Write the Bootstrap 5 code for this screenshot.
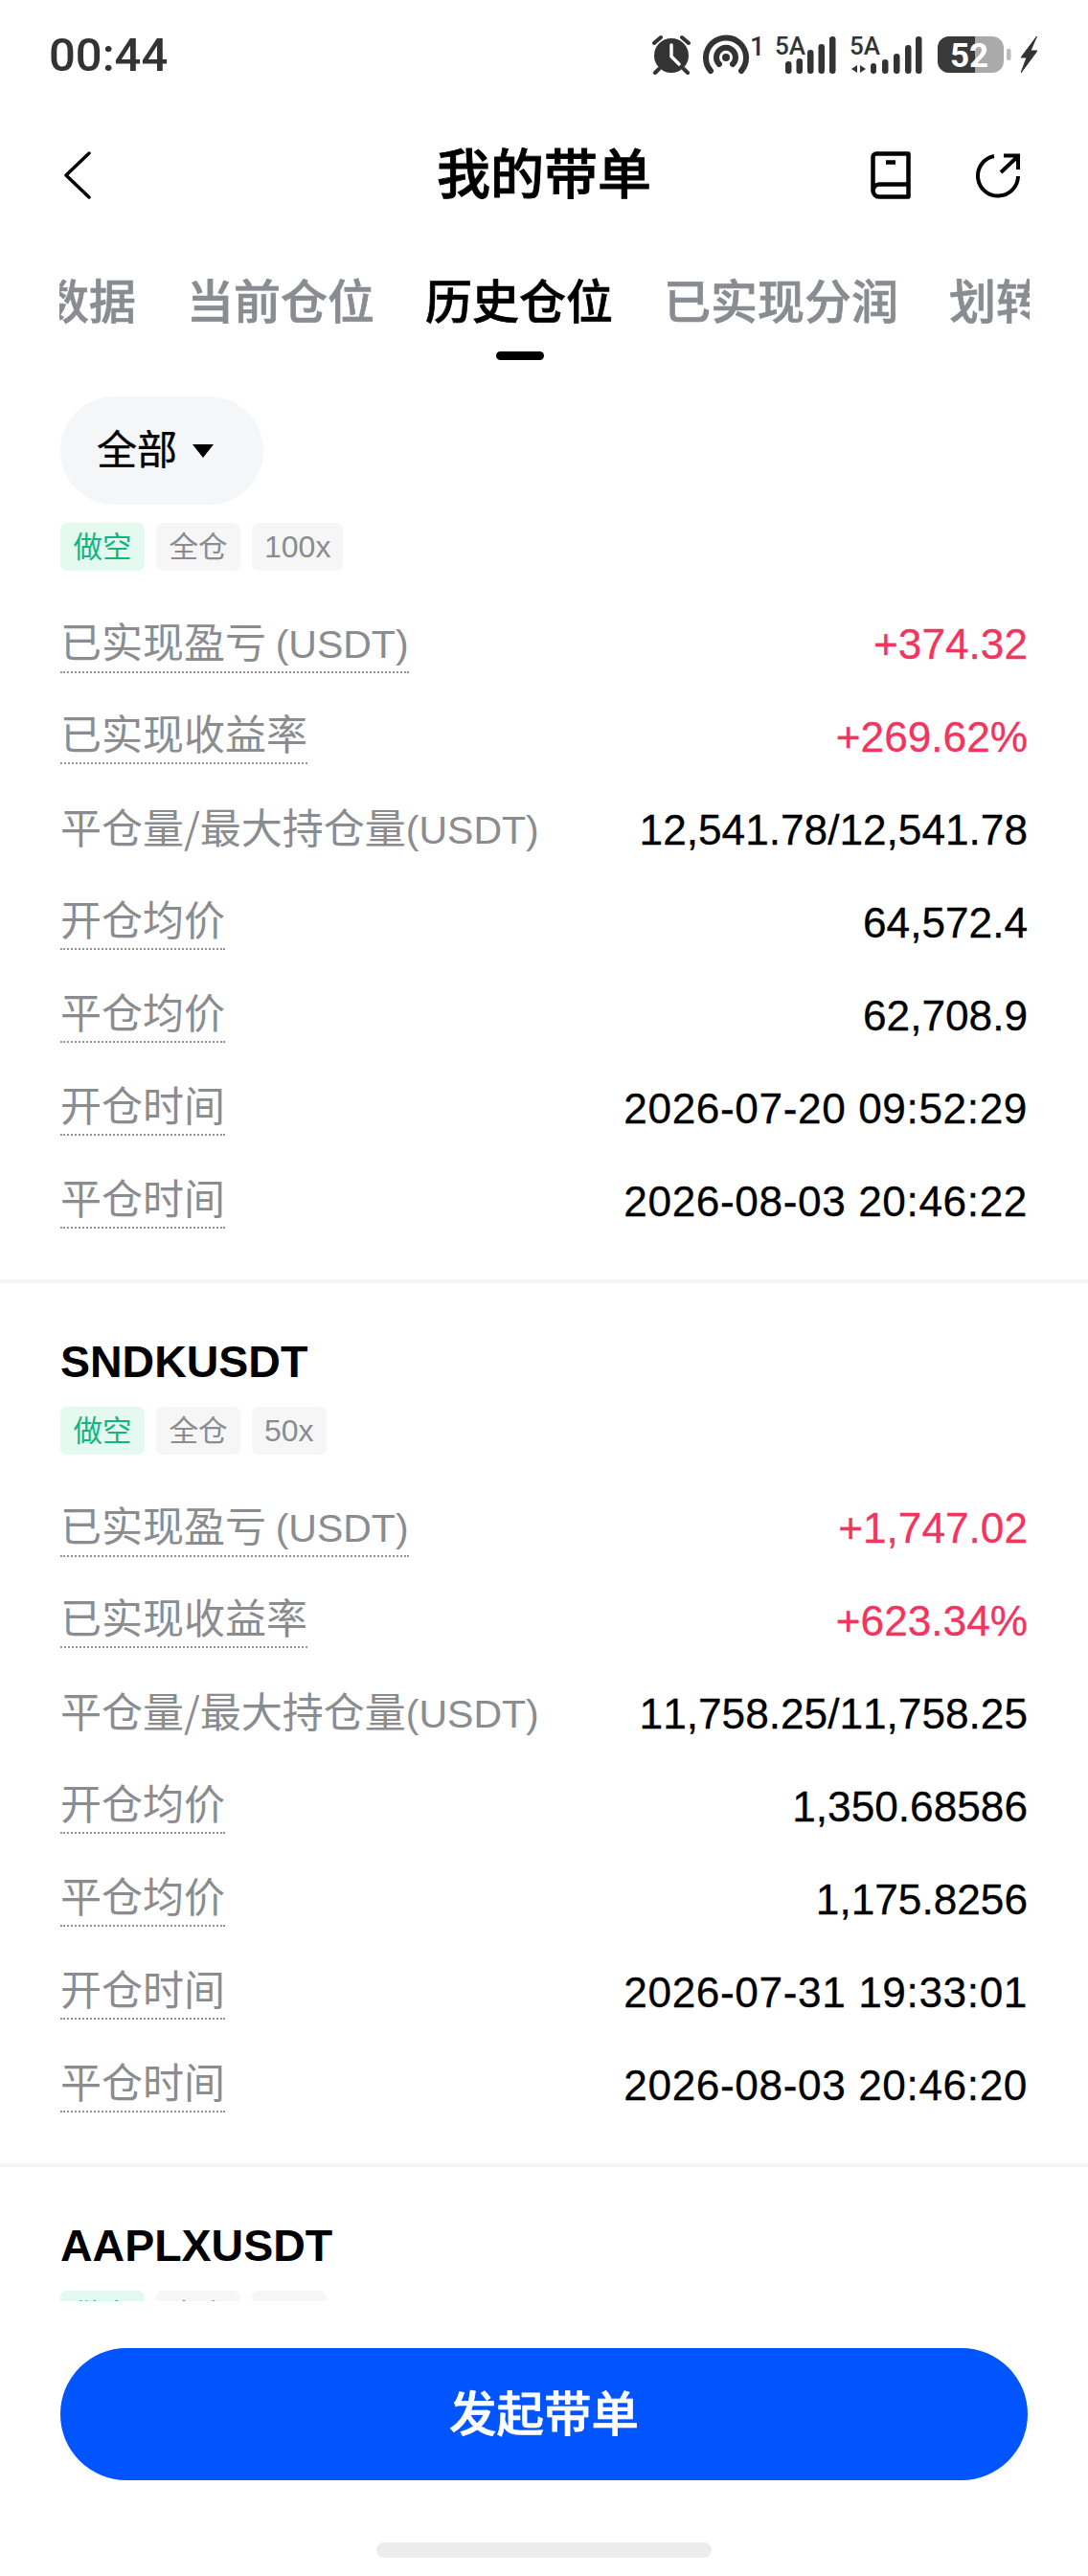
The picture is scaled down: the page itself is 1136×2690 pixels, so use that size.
<!DOCTYPE html>
<html lang="zh-CN">
<head>
<meta charset="utf-8">
<title>我的带单</title>
<link rel="stylesheet" href="https://cdn.jsdelivr.net/npm/bootstrap@5.3.0/dist/css/bootstrap.min.css">
<style>
html,body{margin:0;background:#fff}
body{font-family:"Liberation Sans","Noto Sans CJK SC",sans-serif;color:#000}
.phone{width:1136px;height:2690px;overflow:hidden;background:#fff}
.status-strip{height:114px;padding:0 53px 0 51px;color:#333}
.clock{font:500 49px/1 Roboto,sans-serif;color:#333}
.sicons svg{display:block;flex:none}
.sicons text{font-family:Roboto,sans-serif;font-weight:500;fill:#333}
.top-nav{height:138px}
.page-title{font:500 56px/1 "Noto Sans CJK SC",sans-serif;color:#000;padding-bottom:10px;-webkit-text-stroke:.9px #000}
.tab-strip{height:126px;margin:0 61px 0 62px;overflow:hidden;gap:53px;white-space:nowrap;position:relative}
.tab-item{font:500 49px/60px "Noto Sans CJK SC",sans-serif;color:#898c90;position:relative;height:126px;padding-top:30px;flex:none;-webkit-text-stroke:.7px}
.tab-item.first{margin-left:-18px}
.tab-item.on{color:#000}
.tab-item.on::after{content:"";position:absolute;left:74px;bottom:2px;width:50px;height:9px;border-radius:5px;background:#000}
.list-view{height:2025px;overflow:hidden;flex:none}
.sheet{padding:0 63px}
.filter-pill{height:113px;width:212px;border-radius:57px;background:#f5f6f7;border:0;color:#000;font:400 42px/1 "Noto Sans CJK SC",sans-serif;padding:0 0 0 38px}
.filter-text{padding-bottom:8px;-webkit-text-stroke:.4px #000}
.caret-mark{width:0;height:0;border-left:11px solid transparent;border-right:11px solid transparent;border-top:14px solid #000;margin-left:16px;margin-top:0}
.tag-row{gap:12px;margin-top:19px;height:50px}
.tag-chip{height:50px;border-radius:7px;background:#f6f6f7;color:#8a8c8f;font:400 30.500px/46px "Noto Sans CJK SC",sans-serif;padding:0 13.500px}
.tag-chip.short{background:#e4f9f0;color:#12b581}
.tag-chip.lev{font:400 32px/50px "Liberation Sans",sans-serif;padding:0 13px}
.stat-list{margin-top:28px}
.stat-row{height:97px}
.stat-label{font:400 43px/44px "Noto Sans CJK SC","Liberation Sans",sans-serif;color:#8a8c8f;padding-bottom:10px;border-bottom:2px dotted #919396;white-space:nowrap}
.stat-label.mixed{line-height:52px;padding-bottom:2px}
.stat-label.plain{border-bottom-color:transparent}
.stat-label .latin{font-family:"Liberation Sans",sans-serif;font-size:41px;font-kerning:none}
.stat-value{font:400 44.200px/52px "Liberation Sans",sans-serif;color:#000;white-space:nowrap;font-kerning:none;-webkit-text-stroke:.3px}
.stat-value.up{color:#f0355f}
.stat-value.stamp{letter-spacing:.6px}
.rule{height:4px;background:#f5f5f6;margin:33px -63px 0}
.symbol{font:700 46.500px/56px "Liberation Sans",sans-serif;margin-top:54px;color:#000}
.foot-area{padding:49px 63px 0}
.go-btn{height:138px;border-radius:69px;background:#0055ff;border:0;color:#fff;font:500 49.500px/1 "Noto Sans CJK SC",sans-serif;padding-bottom:8px;-webkit-text-stroke:.7px #fff}
.home-bar{width:350px;height:16px;border-radius:8px;background:#ececec;margin:65px auto 0}
</style>
</head>
<body>
<div class="phone d-flex flex-column">

  <div class="status-strip d-flex justify-content-between align-items-center">
    <span class="clock">00:44</span>
    <div class="sicons d-flex align-items-center">
      <svg width="42" height="42" viewBox="0 0 42 42" style="margin-right:12px"><circle cx="21" cy="22" r="18" fill="#333"/><path d="M3 9 10 3M39 9 32 3M8 36l-4 4M34 36l4 4" stroke="#333" stroke-width="4" stroke-linecap="round"/><path d="M21 11V23l8 8" fill="none" stroke="#fff" stroke-width="3.500" stroke-linecap="round" stroke-linejoin="round"/></svg>
      <svg width="66" height="62" viewBox="0 -10 66 62" style="margin-right:9px"><path d="M8 38A21 21 0 1 1 40 38M17 31A10 10 0 1 1 31 31" fill="none" stroke="#333" stroke-width="6" stroke-linecap="round"/><circle cx="24" cy="24" r="4" fill="#333"/><text x="49" y="22" font-size="27">1</text></svg>
      <svg width="66" height="62" viewBox="0 -10 66 62" style="margin-right:12px"><text x="0" y="21" font-size="26">5A</text><g fill="#333"><rect x="11" y="28" width="6.500" height="13" rx="3.200"/><rect x="22.500" y="25" width="6.500" height="16" rx="3.200"/><rect x="34" y="16" width="6.500" height="25" rx="3.200"/><rect x="45.500" y="10" width="6.500" height="31" rx="3.200"/><rect x="57" y="2" width="6.500" height="39" rx="3.200"/></g></svg>
      <svg width="78" height="62" viewBox="0 -10 78 62" style="margin-right:14px"><text x="0" y="21" font-size="26">5A</text><g fill="#333"><path d="M8 32v8l-6-4zM11 32v8l6-4z"/><rect x="22" y="30" width="6" height="11" rx="3"/><rect x="34" y="26" width="6.500" height="15" rx="3.200"/><rect x="46" y="20" width="6.500" height="21" rx="3.200"/><rect x="58" y="11" width="6.500" height="30" rx="3.200"/><rect x="69" y="2" width="6.500" height="39" rx="3.200"/></g></svg>
      <svg width="78" height="62" viewBox="0 -10 78 62" style="margin-right:9px"><rect x="0" y="2" width="69" height="38" rx="12" fill="#aaa"/><path d="M12 2H39V40H12A12 12 0 0 1 0 28V14A12 12 0 0 1 12 2Z" fill="#3a3a3a"/><text x="33" y="33.500" text-anchor="middle" font-size="35" style="font-weight:700;fill:#fff">52</text><rect x="72" y="15" width="4.500" height="12" rx="2" fill="#bbb"/></svg>
      <svg width="17" height="42" viewBox="0 0 17 42"><path d="M16.500 2 0 24H6L0 40 17 17H10Z" fill="#333" stroke="#333" stroke-width="1"/></svg>
    </div>
  </div>

  <div class="top-nav row g-0 align-items-center">
    <div class="col-3" style="padding-left:66px">
      <svg class="d-block" width="30" height="50" viewBox="0 0 30 50"><path d="M27 2 3 25 27 48" fill="none" stroke="#000" stroke-width="3.500" stroke-linecap="round" stroke-linejoin="round"/></svg>
    </div>
    <div class="col-6 text-center page-title">我的带单</div>
    <div class="col-3 d-flex justify-content-end align-items-center" style="padding-right:71px;gap:68px">
      <svg class="d-block" width="42" height="50" viewBox="0 0 42 50"><path d="M2.500 41V6A3.500 3.500 0 0 1 6 2.500H39.500V47.500H9A6.500 6.500 0 0 1 2.500 41 6.500 6.500 0 0 1 9 34.500H39.500M16 11.500H26" fill="none" stroke="#000" stroke-width="4.500" stroke-linejoin="round"/></svg>
      <svg class="d-block" width="46" height="48" viewBox="0 0 46 48"><path d="M19 4A21 21 0 1 0 44 25M26 21 43 5M29 3.500H44V18" fill="none" stroke="#000" stroke-width="4"/></svg>
    </div>
  </div>

  <div class="tab-strip d-flex">
    <div class="tab-item first">数据</div>
    <div class="tab-item">当前仓位</div>
    <div class="tab-item on">历史仓位</div>
    <div class="tab-item">已实现分润</div>
    <div class="tab-item">划转</div>
  </div>

  <div class="list-view sheet">
    <div class="d-flex" style="margin-top:36px">
      <button class="filter-pill d-flex align-items-center" type="button"><span class="filter-text">全部</span><span class="caret-mark"></span></button>
    </div>
    <div class="tag-row d-flex"><span class="tag-chip short">做空</span><span class="tag-chip">全仓</span><span class="tag-chip lev">100x</span></div>
    <div class="stat-list">
      <div class="stat-row d-flex justify-content-between align-items-center"><span class="stat-label mixed">已实现盈亏 <span class="latin">(USDT)</span></span><span class="stat-value up">+374.32</span></div>
      <div class="stat-row d-flex justify-content-between align-items-center"><span class="stat-label">已实现收益率</span><span class="stat-value up">+269.62%</span></div>
      <div class="stat-row d-flex justify-content-between align-items-center"><span class="stat-label mixed plain">平仓量/最大持仓量<span class="latin">(USDT)</span></span><span class="stat-value">12,541.78/12,541.78</span></div>
      <div class="stat-row d-flex justify-content-between align-items-center"><span class="stat-label">开仓均价</span><span class="stat-value">64,572.4</span></div>
      <div class="stat-row d-flex justify-content-between align-items-center"><span class="stat-label">平仓均价</span><span class="stat-value">62,708.9</span></div>
      <div class="stat-row d-flex justify-content-between align-items-center"><span class="stat-label">开仓时间</span><span class="stat-value stamp">2026-07-20 09:52:29</span></div>
      <div class="stat-row d-flex justify-content-between align-items-center"><span class="stat-label">平仓时间</span><span class="stat-value stamp">2026-08-03 20:46:22</span></div>
    </div>
    <div class="rule"></div>

    <div class="symbol">SNDKUSDT</div>
    <div class="tag-row d-flex"><span class="tag-chip short">做空</span><span class="tag-chip">全仓</span><span class="tag-chip lev">50x</span></div>
    <div class="stat-list">
      <div class="stat-row d-flex justify-content-between align-items-center"><span class="stat-label mixed">已实现盈亏 <span class="latin">(USDT)</span></span><span class="stat-value up">+1,747.02</span></div>
      <div class="stat-row d-flex justify-content-between align-items-center"><span class="stat-label">已实现收益率</span><span class="stat-value up">+623.34%</span></div>
      <div class="stat-row d-flex justify-content-between align-items-center"><span class="stat-label mixed plain">平仓量/最大持仓量<span class="latin">(USDT)</span></span><span class="stat-value">11,758.25/11,758.25</span></div>
      <div class="stat-row d-flex justify-content-between align-items-center"><span class="stat-label">开仓均价</span><span class="stat-value">1,350.68586</span></div>
      <div class="stat-row d-flex justify-content-between align-items-center"><span class="stat-label">平仓均价</span><span class="stat-value">1,175.8256</span></div>
      <div class="stat-row d-flex justify-content-between align-items-center"><span class="stat-label">开仓时间</span><span class="stat-value stamp">2026-07-31 19:33:01</span></div>
      <div class="stat-row d-flex justify-content-between align-items-center"><span class="stat-label">平仓时间</span><span class="stat-value stamp">2026-08-03 20:46:20</span></div>
    </div>
    <div class="rule"></div>

    <div class="symbol">AAPLXUSDT</div>
    <div class="tag-row d-flex"><span class="tag-chip short">做空</span><span class="tag-chip">全仓</span><span class="tag-chip lev">20x</span></div>
  </div>

  <div class="foot-area">
    <button class="go-btn w-100 d-flex align-items-center justify-content-center" type="button">发起带单</button>
    <div class="home-bar"></div>
  </div>
</div>
<script src="https://cdn.jsdelivr.net/npm/bootstrap@5.3.0/dist/js/bootstrap.bundle.min.js"></script>
</body>
</html>
